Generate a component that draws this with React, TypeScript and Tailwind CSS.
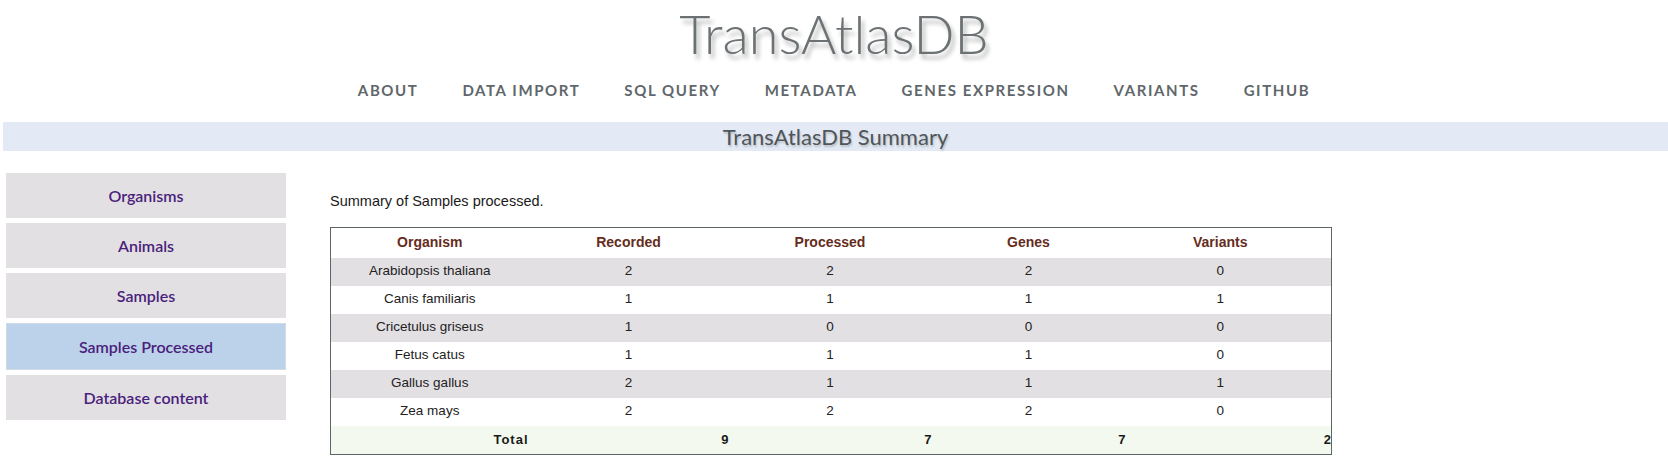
const NAV = ["About", "Data Import", "SQL Query", "Metadata", "Genes Expression", "Variants", "GitHub"];

const MENU = ["Organisms", "Animals", "Samples", "Samples Processed", "Database content"];

const ROWS: [string, number, number, number, number][] = [
  ["Arabidopsis thaliana", 2, 2, 2, 0],
  ["Canis familiaris", 1, 1, 1, 1],
  ["Cricetulus griseus", 1, 0, 0, 0],
  ["Fetus catus", 1, 1, 1, 0],
  ["Gallus gallus", 2, 1, 1, 1],
  ["Zea mays", 2, 2, 2, 0],
];

export default function App() {
  return (
    <div className="min-h-[472px] w-[1668px] bg-white font-['Lato','Liberation_Sans',sans-serif]">
      {/* header */}
      <div className="flex justify-center pt-[3px]">
        <h1 className="text-[54px] font-light leading-[62px] text-[#6c7173] [text-shadow:3px_5px_4px_#b5b5b5]">
          TransAtlasDB
        </h1>
      </div>
      <nav className="mt-[15px] flex justify-center gap-[44px]">
        {NAV.map((n) => (
          <a
            key={n}
            className="text-[15px] font-bold uppercase leading-[20px] tracking-[1.6px] text-[#5f676b]"
          >
            {n}
          </a>
        ))}
      </nav>
      <div className="ml-[3px] mt-[22px] flex h-[29px] items-center justify-center bg-[#e3eaf5]">
        <h2 className="text-[22px] font-normal leading-[29px] text-[#4f5559] [text-shadow:1px_2px_2px_#b9bec4]">
          TransAtlasDB Summary
        </h2>
      </div>

      <div className="mt-[22px] flex">
        {/* sidebar */}
        <div className="ml-[6px] flex w-[280px] flex-col gap-[5px]">
          {MENU.map((m) =>
            m === "Samples Processed" ? (
              <div
                key={m}
                className="flex h-[47px] items-center justify-center border border-[#d0dbe8] bg-[#bcd2ea] text-[16px] font-semibold text-[#4a1e7c]"
              >
                {m}
              </div>
            ) : (
              <div
                key={m}
                className="flex h-[45px] items-center justify-center bg-[#e2e0e3] text-[16px] font-semibold text-[#4a1e7c]"
              >
                {m}
              </div>
            ),
          )}
        </div>

        {/* content */}
        <div className="ml-[44px] font-['Liberation_Sans',Arial,sans-serif]">
          <p className="mt-[19px] text-[14.5px] leading-[18px] text-[#1a1a1a]">
            Summary of Samples processed.
          </p>
          <table className="mt-[17px] w-[1002px] table-fixed border-collapse border border-[#5d6566] text-center">
            <colgroup>
              <col className="w-[198px]" />
              <col className="w-[200px]" />
              <col className="w-[203px]" />
              <col className="w-[194px]" />
              <col />
            </colgroup>
            <thead>
              <tr className="h-[30px] text-[14px] font-bold text-[#652c20]">
                <th>Organism</th>
                <th>Recorded</th>
                <th>Processed</th>
                <th>Genes</th>
                <th className="pr-[16px]">Variants</th>
              </tr>
            </thead>
            <tbody className="text-[13.5px] text-[#222]">
              {ROWS.map((r, i) => (
                <tr key={r[0]} className={`h-[28px] ${i % 2 === 0 ? "bg-[#e2e0e3]" : "bg-white"}`}>
                  <td>{r[0]}</td>
                  <td>{r[1]}</td>
                  <td>{r[2]}</td>
                  <td>{r[3]}</td>
                  <td className="pr-[16px]">{r[4]}</td>
                </tr>
              ))}
              <tr className="h-[29px] bg-[#f3f9ee] text-right text-[13px] font-bold text-[#1a1a1a]">
                <td className="tracking-[1px]">Total</td>
                <td>9</td>
                <td>7</td>
                <td>7</td>
                <td>2</td>
              </tr>
            </tbody>
          </table>
        </div>
      </div>
    </div>
  );
}
